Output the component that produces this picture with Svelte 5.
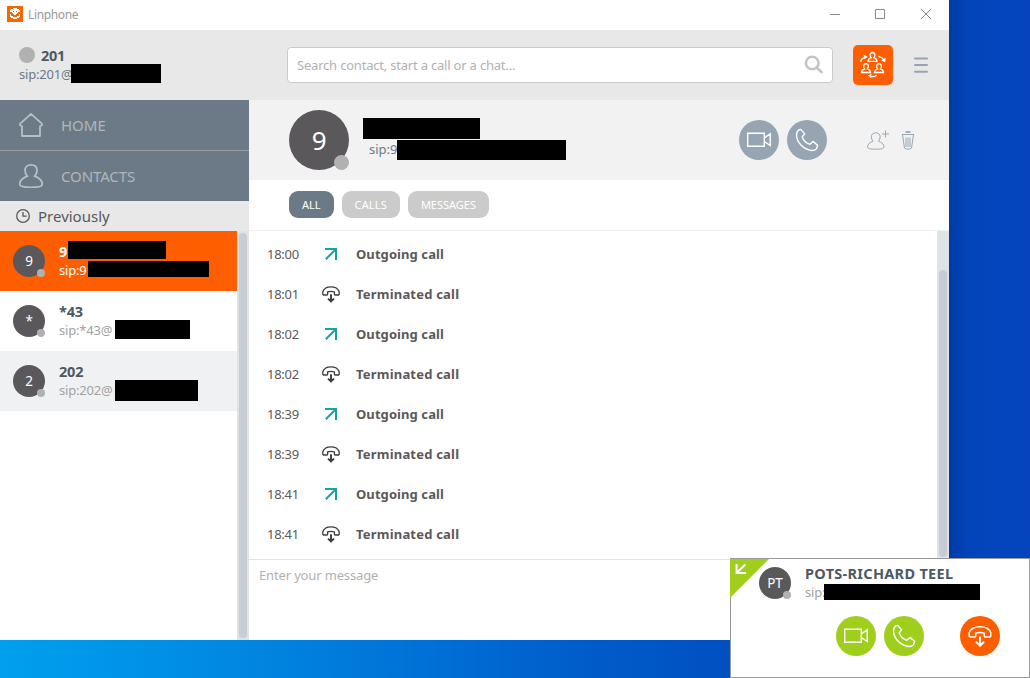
<script>
  const contacts = [
    { initial: '9', name: '9', sip: 'sip:9', selected: true, bars: [[68, 10, 98, 18], [88, 30, 121, 16]] },
    { initial: '*', name: '*43', sip: 'sip:*43@', bars: [[115, 29, 75, 19]] },
    { initial: '2', name: '202', sip: 'sip:202@', shaded: true, bars: [[115, 29, 83, 21]] }
  ];
  const log = ['18:00', '18:01', '18:02', '18:02', '18:39', '18:39', '18:41', '18:41'].map((time, i) => ({
    time,
    outgoing: i % 2 === 0
  }));
  const person =
    'M8.3 12.2C6.6 10.3 6 8.4 6 6.3C6 3 8.3 .9 12 .9S18 3 18 6.3C18 8.4 17.4 10.3 15.7 12.2C20 14 23.3 16.4 23.3 20.2C23.3 22.6 18.7 23.3 12 23.3S.7 22.6 .7 20.2C.7 16.4 4 14 8.3 12.2Z';
</script>

{#snippet bar(b)}
  <span class="bar" style="left:{b[0]}px;top:{b[1]}px;width:{b[2]}px;height:{b[3]}px"></span>
{/snippet}

{#snippet camera()}
  <svg width="26" height="18" viewBox="0 0 26 18" fill="none" stroke="#fff" stroke-width="1.4">
    <path d="M1.7 2.2H18.3V15.3H1.7ZM18.3 6.8L24.2 2.9V14.5L18.3 10.5" />
  </svg>
{/snippet}

{#snippet phone()}
  <svg width="24" height="24" viewBox="0 0 24 24" fill="none" stroke="#fff" stroke-width="1.4" stroke-linejoin="round">
    <path d="M5.8 1.4L9.7 5.9L7.2 8.8C8.3 12.2 11 15.1 14.9 16.3L18 13.4L22.6 17.3L21.6 20.6Q20 22.7 16.5 22.5C8 21.1 1.8 14.4 1.5 7Q1.7 3.6 3.5 2Z" />
  </svg>
{/snippet}

{#snippet hangup(color)}
  <svg width="24" height="22" viewBox="0 0 24 22" fill="none" stroke={color} stroke-width="1.5" stroke-linejoin="round">
    <path d="M1.2 11V7.7C2.6 3.8 7 1.7 12 1.7S21.4 3.8 22.8 7.7V11L21.8 12H17L16.3 11V8.2Q12 6.9 7.7 8.2V11L7 12H2.2Z" />
    <path d="M12 11.5V20M8 16.7L12 20.7L16 16.7" stroke-width="2" stroke-linejoin="miter" />
  </svg>
{/snippet}

<div class="desktop">
  <div class="window">
    <div class="titlebar">
      <svg class="logo" width="16" height="16" viewBox="0 0 16 16">
        <rect width="16" height="16" fill="#f36805" />
        <path d="M6 2H10V3H12V4H13V6H11V7H10V8H9V9H7V8H6V7H5V6H3V4H4V3H6ZM3 8H4V10H6V11H10V10H12V8H13V11H12V12H10V13H6V12H4V11H3Z" fill="#fff" />
        <path d="M6 5H7V6H6ZM9 5H10V6H9Z" fill="#f36805" />
      </svg>
      <span>Linphone</span>
      <svg class="controls" width="101" height="12" viewBox="0 0 101 12" fill="none" stroke="#888">
        <path d="M0 6.5H10" />
        <path d="M45.5 1.5H54.5V10.5H45.5Z" />
        <path d="M91 1L101 11M101 1L91 11" />
      </svg>
    </div>

    <header class="top">
      <div class="account">
        <div class="account-name"><i></i><b>201</b></div>
        <div class="account-sip">sip:201@</div>
        {@render bar([71, 34, 90, 19])}
      </div>
      <div class="search">
        <span>Search contact, start a call or a chat...</span>
        <svg width="20" height="20" viewBox="0 0 20 20" fill="none" stroke="#c4c4c4" stroke-width="2.6">
          <circle cx="8.2" cy="8" r="6.3" /><path d="M12.9 12.7L17.6 17.2" stroke-linecap="round" />
        </svg>
      </div>
      <div class="conference">
        <svg width="28" height="28" viewBox="0 0 28 28" fill="none" stroke="#fff" stroke-width="1.3">
          <g id="member">
            <path d="M12.1 6.7Q11.1 5.5 11.1 4.1Q11.2 1.7 13.5 1.5Q15.8 1.7 15.9 4.1Q15.9 5.5 14.9 6.7Q18 8 18 10.3H9Q9 8 12.1 6.7Z" />
          </g>
          <use href="#member" x="-6.5" y="11.2" /><use href="#member" x="6.5" y="11.2" />
          <path d="M1.6 10.8Q2.2 7.7 5.4 6.3M19.5 5.4Q23.4 6.2 25.1 9M17.8 24.2Q15.2 26.4 10.8 25.4" />
          <path d="M4.5 3.4L8.7 5.7L5.5 8.3ZM26.6 6.7L26.3 11.3L22.2 9.4ZM12.5 22.8L8.8 24.4L12 27Z" fill="#fff" stroke="none" />
        </svg>
      </div>
      <svg class="menu" width="14" height="18" viewBox="0 0 14 18" stroke="#96a5b1" stroke-width="2" stroke-linecap="round">
        <path d="M1 2.4H13M1 9H13M1 15.7H13" />
      </svg>
    </header>

    <div class="body">
      <aside>
        <nav>
          <div class="nav-item">
            <svg width="24" height="24" viewBox="0 0 24 24" fill="none" stroke="#b6bfc5" stroke-width="1.8" stroke-linejoin="round">
              <path d="M3 13.2L1 12.2L1.2 10.7L12 .9L22.8 10.7L23 12.2L21 13.2V23H3Z" />
            </svg>
            HOME
          </div>
          <div class="nav-item contacts-item">
            <svg width="24" height="24" viewBox="0 0 24 24" fill="none" stroke="#b6bfc5" stroke-width="1.8"><path d={person} /></svg>
            CONTACTS
          </div>
        </nav>
        <div class="previously">
          <svg width="14" height="14" viewBox="0 0 14 14" fill="none" stroke="#5a585b" stroke-width="1.3">
            <circle cx="7" cy="7" r="6.3" /><path d="M7 3V7.2H10.7" />
          </svg>
          Previously
        </div>
        <div class="history">
          <div class="contacts">
            {#each contacts as c}
              <div class="contact" class:selected={c.selected} class:shaded={c.shaded}>
                <div class="avatar">{c.initial}<i></i></div>
                <div class="label"><b>{c.name}</b><span>{c.sip}</span></div>
                {#each c.bars as b}{@render bar(b)}{/each}
              </div>
            {/each}
          </div>
          <div class="scroll"><i></i></div>
        </div>
      </aside>

      <main>
        <div class="peer">
          <div class="avatar large">9<i></i></div>
          <span class="peer-sip">sip:9</span>
          {@render bar([114, 18, 117, 21])}
          {@render bar([148, 40, 169, 20])}
          <div class="peer-actions">
            <div class="round">{@render camera()}</div>
            <div class="round">{@render phone()}</div>
            <svg class="add" width="22" height="20" viewBox="0 0 22 20" fill="none" stroke="#9aa8b2" stroke-width="1">
              <path d={person} transform="translate(0 2.2) scale(.73)" stroke-width="1.35" />
              <path d="M18.5 .5V7.5M15 4H22" />
            </svg>
            <svg class="trash" width="14" height="19" viewBox="0 0 14 19" fill="none" stroke="#9aa8b2">
              <path d="M4.5 1H9.5" stroke-width="1.8" /><path d="M.8 3.5H13.2M1.5 3.5L3.3 16Q3.5 18 5.5 18H8.5Q10.5 18 10.7 16L12.5 3.5M5 6.5V16M7 6.5V16M9 6.5V16" />
            </svg>
          </div>
        </div>
        <div class="tabs">
          <span class="tab active">ALL</span><span class="tab calls">CALLS</span><span class="tab">MESSAGES</span>
        </div>
        <div class="log">
          <div class="entries">
            {#each log as e}
              <div class="entry">
                <time>{e.time}</time>
                <div class="entry-icon">
                  {#if e.outgoing}
                    <svg width="12" height="12" viewBox="0 0 12 12" fill="none" stroke="#16a3a6" stroke-width="2"><path d="M0 1H11V12M11 1L.7 11.3" /></svg>
                  {:else}
                    <svg width="18" height="17" viewBox="0 0 18 17" fill="none" stroke="#3c3c3d" stroke-width="1.3" stroke-linejoin="round">
                      <path d="M.8 8.2V5.8C2 2.6 5.3 .9 9 .9S16 2.6 17.2 5.8V8.2L16.5 9H12.8L12.4 8.4V5.8Q9 4.9 5.6 5.8V8.4L5.2 9H1.5Z" /><path d="M9 8.3V15M6 12.6L9 15.5L12 12.6" stroke-width="1.9" stroke-linejoin="miter" />
                    </svg>
                  {/if}
                </div>
                <b class:terminated={!e.outgoing}>{e.outgoing ? 'Outgoing call' : 'Terminated call'}</b>
              </div>
            {/each}
          </div>
          <div class="scroll"><i></i></div>
        </div>
        <div class="message">Enter your message</div>
      </main>
    </div>
  </div>

  <div class="incoming">
    <svg class="corner" width="39" height="39" viewBox="0 0 39 39">
      <path d="M0 0H39L0 39Z" fill="#9fce1d" /><path d="M15.3 5.5L7 13.5M6.6 5V14.1H16" fill="none" stroke="#fff" stroke-width="2" />
    </svg>
    <div class="caller">
      <div class="avatar">PT<i></i></div>
      <div class="label"><b>POTS-RICHARD TEEL</b><span>sip:</span></div>
      {@render bar([93, 25, 156, 16])}
    </div>
    <div class="answer">
      <div class="round green">{@render camera()}</div>
      <div class="round green">{@render phone()}</div>
      <div class="round red">{@render hangup('#fff')}</div>
    </div>
  </div>
</div>

<style>
  :global(body) { margin: 0; overflow: hidden; }
  * { box-sizing: border-box; }
  svg { display: block; flex: none; }
  .desktop {
    position: relative; width: 1030px; height: 678px; overflow: hidden; white-space: nowrap;
    font: 13px/20px "Noto Sans", sans-serif; color: #5a585b;
    background: linear-gradient(90deg, #003ba7 0, #0444bb 22px, #0544bd) 949px 0 / 81px 678px no-repeat,
      linear-gradient(90deg, #00a0ee 0, #008de5 190px, #0074d8 400px, #005bc9 600px, #004fc0 740px);
  }
  .window { position: absolute; left: 0; top: 0; width: 949px; height: 640px; background: #fff; display: flex; flex-direction: column; }
  .titlebar { height: 30px; display: flex; align-items: center; padding: 0 18px 2px 7px; font-size: 12px; letter-spacing: -.35px; color: #999; }
  .titlebar span { margin: 2px 0 0 5px; }
  .controls { margin-left: auto; }
  .top { height: 70px; background: #e8e8e8; display: flex; align-items: center; }
  .account { position: relative; width: 287px; height: 70px; padding: 15px 0 0 19px; }
  .account-name { display: flex; align-items: center; gap: 6px; height: 20px; color: #4b5964; }
  .account-name i { width: 16px; height: 16px; border-radius: 50%; background: #b1b1b1; }
  .account-name b { font-size: 14.5px; letter-spacing: -.3px; }
  .account-sip { line-height: 18px; letter-spacing: -.2px; color: #6b7a86; }
  .bar { position: absolute; background: #000; }
  .search { width: 546px; height: 36px; border: 1px solid #cbcbcb; border-radius: 4px; background: #fff; display: flex; align-items: center; justify-content: space-between; padding: 0 8px 0 9px; letter-spacing: -.2px; color: #b1b1b1; }
  .conference { width: 40px; height: 40px; margin-left: 20px; border-radius: 5px; background: #ff5e00; display: flex; align-items: center; justify-content: center; }
  .menu { margin-left: 21px; }
  .body { flex: 1; display: flex; min-height: 0; }
  aside { width: 249px; display: flex; flex-direction: column; }
  nav { background: #6b7a86; color: #b1b6ba; font-size: 15px; }
  .nav-item { height: 50px; display: flex; align-items: center; padding-left: 19px; gap: 18px; }
  .contacts-item { height: 51px; border-top: 1px solid #9a9ea3; letter-spacing: -.1px; }
  .previously { height: 30px; background: #e8e8e8; display: flex; align-items: center; padding-left: 16px; gap: 8px; font-size: 15px; }
  .history { flex: 1; display: flex; }
  .contacts { width: 237px; }
  .contact { position: relative; height: 60px; padding-left: 13px; display: flex; align-items: center; gap: 14px; }
  .contact .label { margin-top: -2px; }
  .selected { background: #ff5e00; }
  .shaded { background: #f0f1f3; }
  .avatar { position: relative; width: 32px; height: 32px; flex: none; border-radius: 50%; background: #5a585b; color: #fff; font-size: 13.5px; letter-spacing: -.2px; display: flex; align-items: center; justify-content: center; }
  .avatar i { position: absolute; right: 0; bottom: 0; width: 8px; height: 8px; border-radius: 50%; background: #b1b1b1; }
  .label { display: flex; flex-direction: column; line-height: 18px; letter-spacing: -.2px; color: #a1a1a1; }
  .label b { font-size: 14.5px; line-height: 20px; color: #4b5964; }
  .selected .label, .selected .label b { color: #fff; }
  .scroll { width: 12px; background: #dee3e6; padding: 2px; display: flex; }
  .scroll i { width: 8px; border-radius: 4px; background: #c8cdd5; }
  main { flex: 1; display: flex; flex-direction: column; }
  .peer { position: relative; height: 80px; background: #f2f2f2; display: flex; align-items: center; padding: 0 34px 0 40px; }
  .large { width: 60px; height: 60px; font-size: 26px; }
  .large i { width: 15px; height: 15px; }
  .peer-sip { margin: 18px 0 0 20px; color: #6b7a86; }
  .peer-actions { display: flex; align-items: center; gap: 8px; margin-left: auto; }
  .round { width: 40px; height: 40px; border-radius: 50%; background: #96a5b1; display: flex; align-items: center; justify-content: center; }
  .add { margin-left: 32px; }
  .trash { margin: 0 0 0 4px; }
  .tabs { height: 50px; display: flex; align-items: center; gap: 8px; padding: 0 0 1px 40px; }
  .tab { height: 27px; border-radius: 9px; padding: 0 13px; line-height: 28px; font-size: 11px; color: #fff; background: #cbcbcb; }
  .calls { letter-spacing: .15px; }
  .active { background: #6b7a86; }
  .log { height: 329px; border-top: 1px solid #f0f0f0; display: flex; }
  .entries { width: 688px; padding-top: 3px; }
  .entry { height: 40px; padding-left: 18px; display: flex; align-items: center; }
  .entry time { width: 55px; letter-spacing: -.25px; }
  .entry-icon { width: 18px; display: flex; justify-content: center; }
  .entry b { margin-left: 16px; letter-spacing: .08px; }
  .entry .terminated { letter-spacing: .2px; }
  .log .scroll { padding-top: 39px; }
  .message { flex: 1; border-top: 1px solid #e3e3e3; padding: 5px 10px; letter-spacing: -.15px; color: #b1b1b1; }
  .incoming { position: absolute; left: 730px; top: 558px; width: 300px; height: 120px; border: 1px solid #999; background: #fff; }
  .corner { position: absolute; left: -1px; top: 0; }
  .caller { position: relative; display: flex; gap: 14px; padding: 8px 0 0 28px; height: 57px; }
  .caller .label { margin-top: -4px; }
  .caller .label b { letter-spacing: .3px; }
  .answer { display: flex; gap: 8px; padding-left: 105px; }
  .green { background: #9fce1d; }
  .red { background: #ff5e00; margin-left: 28px; }
</style>
